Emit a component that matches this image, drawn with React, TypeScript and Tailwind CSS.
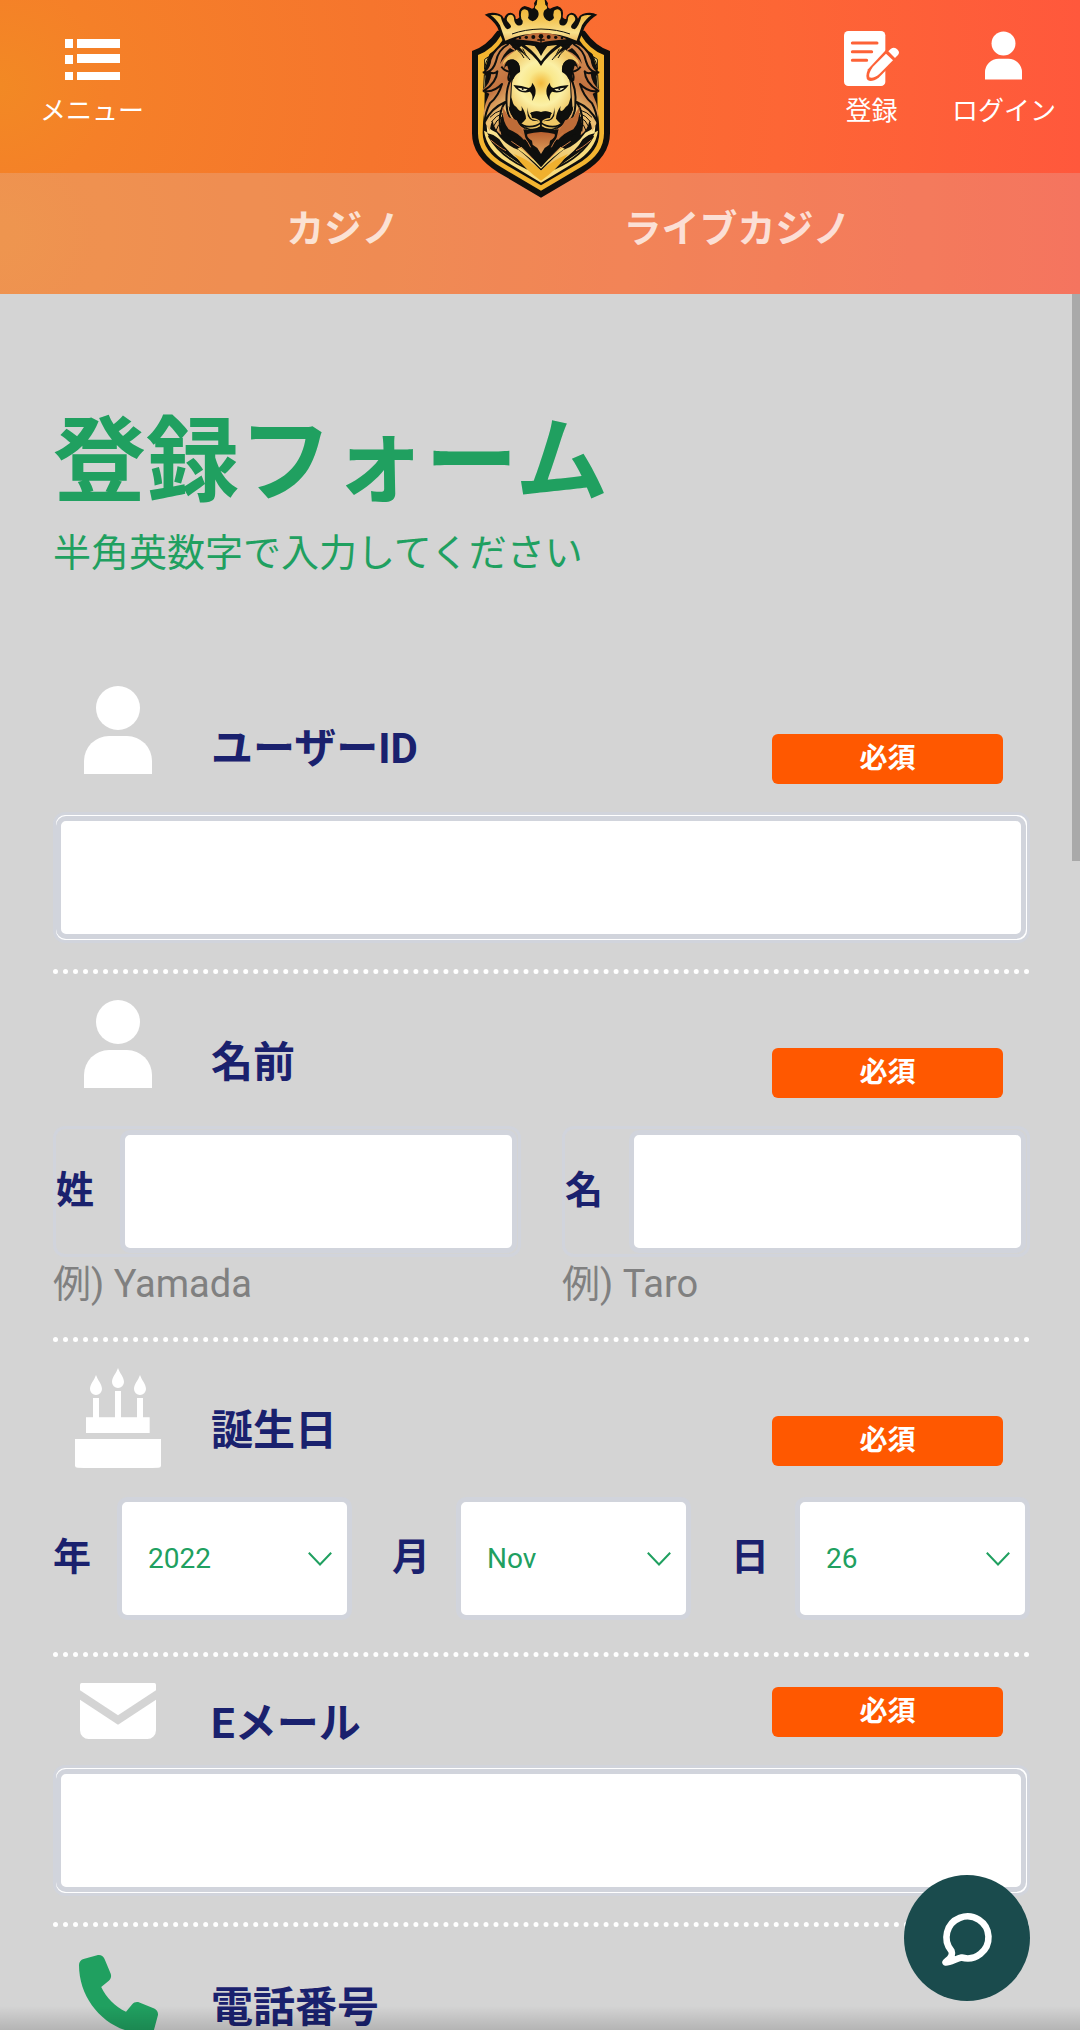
import React from "react";
import { FaPhone } from "react-icons/fa6";

const years = ["2022", "2021", "2020", "2019", "2018"];
const months = ["Nov", "Dec", "Jan", "Feb", "Mar", "Apr", "May", "Jun", "Jul", "Aug", "Sep", "Oct"];
const days = ["26", "27", "28", "29", "30"];

const PersonIcon = ({ className }: { className: string }) => (
  <svg viewBox="0 0 68 88" className={className} fill="currentColor" aria-hidden="true">
    <circle cx="34" cy="22" r="22" />
    <path d="M0 88V75a25 25 0 0 1 25-25h18a25 25 0 0 1 25 25v13z" />
  </svg>
);

const MenuIcon = () => (
  <svg viewBox="0 0 55 41" className="w-[55px] h-[41px]" fill="currentColor" aria-hidden="true">
    <path d="M0 0h8v9H0zM0 16h8v9H0zM0 33h8v8H0zM12 0h43v9H12zM12 15h43v9H12zM12 33h43v8H12z" />
  </svg>
);

const RegisterIcon = () => (
  <svg viewBox="0 0 165 165" className="w-[55px] h-[55px]" aria-hidden="true">
    <rect width="124" height="165" rx="13" fill="#fff" />
    <path
      d="M25 36h74M25 62h58M25 88h43"
      stroke="#fd6237"
      strokeWidth="9"
      strokeLinecap="round"
    />
    <path
      d="M132 50 L147 48 L165 66 L163 80 L104 140 Q84 154 72 148 Q62 140 72 115 Z"
      fill="#fd6237"
    />
    <path
      d="M126 68 L147 88 L106 129 Q88 144 76 139 Q72 128 87 107 Z"
      fill="#fff"
    />
    <path d="M133 61 L140 54 Q151 45 161 56 Q169 65 161 73 L153 81 Z" fill="#fff" />
  </svg>
);

const CakeIcon = () => (
  <svg viewBox="0 0 258 300" className="w-[86px] h-[100px]" fill="currentColor" aria-hidden="true">
    <path d="M129 0c5 15 18 28 18 42a18 18 0 0 1-36 0c0-14 13-27 18-42z" />
    <path d="M63 21c5 15 18 28 18 42a18 18 0 0 1-36 0c0-14 13-27 18-42z" />
    <path d="M195 21c5 15 18 28 18 42a18 18 0 0 1-36 0c0-14 13-27 18-42z" />
    <path d="M120 69h18v79h48V90h18v58h20v47H33v-47h21V90h18v58h48z" />
    <path d="M0 213h258v80q0 6-8 6l-20 1H28l-20-1q-8 0-8-6z" />
  </svg>
);

const MailIcon = () => (
  <svg viewBox="0 0 228 168" className="w-[76px] h-[56px]" fill="currentColor" aria-hidden="true">
    <path d="M5 0h218q5 0 5 5v17L114 97 0 22V5q0-5 5-5z" />
    <path d="M0 50l114 75 114-75v92a26 26 0 0 1-26 26H26a26 26 0 0 1-26-26z" />
  </svg>
);

const ChatIcon = () => (
  <svg
    viewBox="0 0 60 60"
    className="w-[60px] h-[60px]"
    fill="none"
    stroke="currentColor"
    strokeWidth="6.6"
    strokeLinecap="round"
    strokeLinejoin="round"
    aria-hidden="true"
  >
    <path d="M14.5 43A21 21 0 1 1 24.5 49.5C19 50.500 13 55 8.500 54.500C7.500 53 17.500 50.500 14.500 43Z" />
  </svg>
);

// left side of the crest, drawn twice with the second one mirrored
const CrestHalf = () => (
  <g>
    <path d="M118 172Q136 164 150 156L140 190L132 214L118 216L134 222L132 268L117 270L134 278L133 330L126 400Q122 390 116 360Z" fill="#f3b530" />
    <path d="M134 178L146 170Q134 192 134 208ZM133 224L138 226L135 264L131 266Z" fill="#fae28a" stroke="#0f0f0d" strokeWidth="3" />
    <path d="M132 392Q140 450 200 486L303 548V536L214 474Q158 440 140 396Z" fill="#f8dc7c" />
    <path d="M142 400Q160 402 178 418Q196 452 246 486L303 530V512Q262 470 236 450Q196 436 170 398Q154 392 140 378Z" fill="url(#crestPale)" />
    <path d="M146 408Q180 470 262 506" fill="none" stroke="#0f0f0d" strokeWidth="5" />
    <path d="M222 462Q270 482 303 512V542Q256 510 222 462Z" fill="#efb02e" />
    <path d="M232 446Q268 470 303 506V490Q276 458 262 432Z" fill="#f6d774" />
    <path
      d="M206 128Q166 142 154 180Q152 202 138 214Q148 216 154 220Q152 250 126 272Q144 276 148 282Q134 310 130 340Q136 380 150 394Q150 374 158 362Q162 388 184 406Q176 370 188 340Q196 378 240 404L262 424L272 400L226 366L208 330L214 240L200 190L226 150Z"
      fill="url(#crestMane)"
    />
    <path
      d="M206 132Q174 150 168 184Q160 210 142 216Q166 224 172 214Q170 248 132 272Q158 280 186 252Q176 288 150 310Q136 336 134 366Q154 324 196 306Q172 340 182 394M184 200Q200 220 214 212Q202 222 206 240L216 232Q196 262 200 316Q200 350 228 376"
      fill="none"
      stroke="#0f0f0d"
      strokeWidth="6"
      strokeLinejoin="round"
    />
    <path d="M150 352Q164 336 186 330M154 366Q168 346 188 340M160 380Q168 360 186 352M168 392Q174 372 186 366" fill="none" stroke="#0f0f0d" strokeWidth="3" />
    <path d="M188 320L206 352L230 360L250 396L268 404L252 420Q232 398 206 388Q186 364 188 320Z" fill="#bf6c38" />
    <path
      d="M303 146Q270 128 244 138L208 166Q190 178 188 196Q204 170 230 184Q242 196 240 216Q220 226 216 250L214 292Q224 330 232 328Q250 342 244 318Q258 340 258 356Q246 372 238 372Q262 392 276 398L303 380Z"
      fill="url(#crestFace)"
    />
    <path d="M192 206Q196 176 220 178Q240 184 240 210Q224 212 222 234L206 250Q208 226 214 208Q204 186 192 206Z" fill="#0f0f0d" />
    <path d="M210 144Q186 164 180 192Q196 162 224 152ZM224 128Q250 148 264 178Q254 158 216 142ZM240 126Q274 144 303 184V198Q284 166 240 136ZM268 124Q288 138 303 168V140Q292 126 268 124Z" fill="#0f0f0d" />
    <path d="M248 146Q256 166 270 180M232 150Q246 160 252 174" fill="none" stroke="#0f0f0d" strokeWidth="3" />
    <path d="M220 255Q246 256 266 264Q277 260 276 248Q298 272 276 303Q281 286 270 275Q238 284 220 255Z" fill="#0f0f0d" />
    <path d="M233 263Q242 274 257 272L263 268Z" fill="#fff6c0" />
    <circle cx="248" cy="267" r="3" fill="#0f0f0d" />
    <path d="M218 312Q238 326 248 354Q240 362 228 360Q208 346 206 318L222 340Z" fill="#0f0f0d" />
    <path d="M264 322Q256 354 278 362L303 364V344Q290 334 284 344Q276 350 270 340Q278 332 303 336V366Q292 362 276 358Q262 346 264 322Z" fill="#0f0f0d" />
    <path d="M272 338Q288 330 303 336V366Q292 354 276 354Z" fill="#0f0f0d" />
    <path d="M303 362V380Q284 394 262 386Q240 380 238 366Q248 380 268 380Q290 380 303 368" fill="none" stroke="#0f0f0d" strokeWidth="5" />
    <path d="M303 382Q276 394 250 388L258 420L278 440L282 456L303 480Z" fill="#0f0f0d" />
    <path d="M303 396Q280 398 262 402Q258 412 276 422L278 434L292 444L303 462Z" fill="url(#crestBeard)" />
    <path d="M196 400Q240 432 303 502V470Q276 450 262 424Q230 416 196 400Z" fill="#0f0f0d" />
    <path d="M236 398Q258 412 272 442M214 424Q250 444 278 476M152 420Q180 444 198 452" fill="none" stroke="#c97b45" strokeWidth="3" />
    <path d="M192 132L172 82Q158 58 134 44Q154 34 178 42Q188 46 192 56Q198 38 212 38Q228 42 227 56Q232 60 238 52Q232 24 254 18Q268 22 276 26Q286 24 282 10L288 0H303V140Q250 132 192 132Z" fill="#0f0f0d" />
    <path d="M196 122L180 76Q168 56 152 46Q170 42 182 50Q190 80 202 88Q222 84 206 68Q194 58 206 46Q218 40 222 54Q222 70 232 76Q250 80 248 62Q240 56 244 34Q252 22 264 32Q268 44 264 54Q278 74 292 54Q300 42 292 30Q278 24 290 14L292 0H303V100Q244 100 196 122Z" fill="url(#crestCrown)" />
    <path d="M226 118Q260 98 303 98V128Q278 122 226 118Z" fill="#bd6c38" />
    <path d="M216 102Q254 88 303 87" fill="none" stroke="#0f0f0d" strokeWidth="3" />
    <circle cx="240" cy="114" r="4" fill="#0f0f0d" />
    <circle cx="259" cy="112" r="5" fill="#0f0f0d" />
    <circle cx="280" cy="111" r="6" fill="#0f0f0d" />
  </g>
);

const LionCrest = () => (
  <svg viewBox="90 0 420 600" className="w-[140px] h-[200px]" role="img" aria-label="lion crest">
    <defs>
      <radialGradient id="crestFace" gradientUnits="userSpaceOnUse" cx="303" cy="250" r="110">
        <stop offset="0" stopColor="#f3b93a" />
        <stop offset="0.35" stopColor="#f9e88c" />
        <stop offset="0.6" stopColor="#fbf0a6" />
        <stop offset="1" stopColor="#f0c765" />
      </radialGradient>
      <linearGradient id="crestMane" x1="0" y1="0" x2="0.4" y2="1">
        <stop offset="0" stopColor="#dc9a5c" />
        <stop offset="0.5" stopColor="#c27340" />
        <stop offset="0.75" stopColor="#edc274" />
        <stop offset="1" stopColor="#c87a43" />
      </linearGradient>
      <linearGradient id="crestPale" x1="0" y1="0" x2="1" y2="1">
        <stop offset="0" stopColor="#fbe999" />
        <stop offset="1" stopColor="#e9b65a" />
      </linearGradient>
      <linearGradient id="crestBeard" x1="0" y1="0" x2="0" y2="1">
        <stop offset="0" stopColor="#b9602f" />
        <stop offset="1" stopColor="#e0a05c" />
      </linearGradient>
      <linearGradient id="crestCrown" x1="0" y1="0" x2="0" y2="1">
        <stop offset="0" stopColor="#f0b02c" />
        <stop offset="0.45" stopColor="#f3c24e" />
        <stop offset="0.8" stopColor="#f8e08c" />
        <stop offset="1" stopColor="#eebb62" />
      </linearGradient>
    </defs>
    <path d="M96 153Q140 138 172 92H434Q466 138 510 153V400Q510 470 430 518L303 593L176 518Q96 470 96 400Z" fill="#0f0f0d" />
    <path d="M114 165Q158 148 184 104H422Q448 148 492 165V400Q492 462 422 502L303 572L184 502Q114 462 114 400Z" fill="#f3b530" />
    <path d="M128 174Q164 158 190 118H416Q442 158 478 174V398Q478 454 412 492L303 556L194 492Q128 454 128 398Z" fill="#0f0f0d" />
    <CrestHalf />
    <g transform="translate(606 0) scale(-1 1)">
      <CrestHalf />
    </g>
    <circle cx="303" cy="109" r="7" fill="#0f0f0d" />
    <path d="M292 120h22M303 112v18" stroke="#0f0f0d" strokeWidth="4" />
  </svg>
);

interface HeaderLinkProps {
  label: string;
  children: React.ReactNode;
}
const HeaderLink = ({ label, children }: HeaderLinkProps) => (
  <a href="#" className="flex flex-col items-center">
    <span className="flex h-[56px] items-start">{children}</span>
    <span className="mt-1.5 text-[26px] leading-9">{label}</span>
  </a>
);

const Header = () => (
  <header className="relative shrink-0 text-white">
    <div className="flex justify-between h-[173px] pt-[31px] pl-10 pr-6 bg-[radial-gradient(circle_at_left,#f28924,#f58028_10%,#f6752d_35%,#fd6635_72%,#ff583c)]">
      <button type="button" className="flex flex-col items-center self-start cursor-pointer">
        <span className="flex h-[56px] items-center">
          <MenuIcon />
        </span>
        <span className="mt-1.5 text-[26px] leading-9">メニュー</span>
      </button>
      <div className="flex gap-[53px]">
        <HeaderLink label="登録">
          <RegisterIcon />
        </HeaderLink>
        <HeaderLink label="ログイン">
          <PersonIcon className="w-[37px] h-[49px]" />
        </HeaderLink>
      </div>
    </div>
    <div className="bg-[radial-gradient(circle_at_left,#f68328,#f77d29_10%,#f8762d_35%,#fd6635_72%,#ff583c)]">
      <nav className="flex justify-center items-center h-[121px] pb-2.5 bg-[#d4d4d4]/23">
        <div className="grid grid-cols-2 w-[73%] text-center text-[38px] leading-[56px] font-bold text-white/75">
          <a href="#">カジノ</a>
          <a href="#">ライブカジノ</a>
        </div>
      </nav>
    </div>
    <a href="#" className="absolute top-0 left-1/2 -translate-x-1/2">
      <LionCrest />
    </a>
  </header>
);

const RequiredBadge = () => (
  <span className="w-[231px] h-[50px] mr-[27px] rounded-md bg-[#ff5800] text-center text-[28px] leading-[49px] font-bold text-white">
    必須
  </span>
);

interface FieldHeadProps {
  icon: React.ReactNode;
  label: string;
  htmlFor?: string;
}

const TallFieldHead = ({ icon, label, htmlFor }: FieldHeadProps) => (
  <div className="flex items-end h-[124px] pt-[26px] mb-7">
    <span className="flex justify-center self-start w-[130px] text-white">{icon}</span>
    <label htmlFor={htmlFor} className="flex-1 ml-7 pb-1 text-[42px] leading-[62px] font-bold text-[#1a216e]">
      {label}
    </label>
    <RequiredBadge />
  </div>
);

const FieldHead = ({ icon, label, htmlFor }: FieldHeadProps) => (
  <div className="flex items-start h-[108px] pt-[30px]">
    <span className="flex justify-center -mt-1 w-[130px] text-white">{icon}</span>
    <label htmlFor={htmlFor} className="flex-1 ml-7 pb-1 self-center text-[42px] leading-[62px] font-bold text-[#1a216e]">
      {label}
    </label>
    <RequiredBadge />
  </div>
);

const Divider = () => <hr className="border-0 border-t-[5px] border-dotted border-white" />;

const WideInput = ({ id, type }: { id: string; type: string }) => (
  <div className="h-[131px] mb-[26px] py-px pr-px rounded-xl border-[3px] border-[#d1d4dc] bg-white">
    <input
      id={id}
      type={type}
      className="block w-full h-full px-6 rounded-[10px] border-[5px] border-[#d1d4dc] bg-white text-[28px] text-[#20a060] outline-none"
    />
  </div>
);

interface NameInputProps {
  id: string;
  label: string;
  hint: string;
}
const NameInput = ({ id, label, hint }: NameInputProps) => (
  <div>
    <div className="flex items-center h-[131px] py-px pr-px rounded-xl border-[3px] border-[#d1d4dc]">
      <label htmlFor={id} className="w-16 shrink-0 pb-1 text-[38px] leading-[56px] font-bold text-[#1a216e]">
        {label}
      </label>
      <input
        id={id}
        type="text"
        className="flex-1 min-w-0 h-full px-6 rounded-[10px] border-[5px] border-[#d1d4dc] bg-white text-[28px] text-[#20a060] outline-none"
      />
    </div>
    <p className="text-[38px] leading-[54px] text-[#808080]">{hint}</p>
  </div>
);

interface DateSelectProps {
  id: string;
  label: string;
  options: string[];
}
const DateSelect = ({ id, label, options }: DateSelectProps) => (
  <div className="flex items-center">
    <label htmlFor={id} className="w-16 shrink-0 pb-1 text-[38px] leading-[56px] font-bold text-[#1a216e]">
      {label}
    </label>
    <div className="relative flex-1">
      <select
        id={id}
        className="block w-full h-[123px] pl-[26px] appearance-none rounded-[10px] border-[5px] border-[#d1d4dc] bg-white text-[28px] text-[#20a060]"
      >
        {options.map((option) => (
          <option key={option}>{option}</option>
        ))}
      </select>
      <svg
        viewBox="0 0 24 14"
        className="absolute right-5 top-1/2 -translate-y-1/2 w-6 h-[14px] pointer-events-none"
        fill="none"
        stroke="#20a060"
        strokeWidth="2"
        aria-hidden="true"
      >
        <path d="M0.8 0.8L12 12.5L23.2 0.8" />
      </svg>
    </div>
  </div>
);

const App = () => {
  return (
    <div className="relative flex flex-col h-screen overflow-hidden bg-[#d4d4d4] font-[Roboto,'Noto_Sans_CJK_JP',sans-serif]">
      <Header />
      <main className="relative flex-1 min-h-0 overflow-hidden">
        <form className="pt-[119px] pl-[53px] pr-[50px]">
          <h1 className="text-[93px] leading-[100px] font-bold text-[#20a060]">登録フォーム</h1>
          <p className="mt-3 mb-[79px] text-[38px] leading-[56px] text-[#20a060]">
            半角英数字で入力してください
          </p>

          <TallFieldHead
            icon={<PersonIcon className="w-[68px] h-[88px]" />}
            label="ユーザーID"
            htmlFor="userId"
          />
          <WideInput id="userId" type="text" />
          <Divider />

          <TallFieldHead
            icon={<PersonIcon className="w-[68px] h-[88px]" />}
            label="名前"
            htmlFor="lastName"
          />
          <div className="grid grid-cols-2 gap-[41px] mb-[26px]">
            <NameInput id="lastName" label="姓" hint="例) Yamada" />
            <NameInput id="firstName" label="名" hint="例) Taro" />
          </div>
          <Divider />

          <TallFieldHead icon={<CakeIcon />} label="誕生日" htmlFor="birthYear" />
          <div className="grid grid-cols-3 gap-10 pt-[3px] mb-8">
            <DateSelect id="birthYear" label="年" options={years} />
            <DateSelect id="birthMonth" label="月" options={months} />
            <DateSelect id="birthDay" label="日" options={days} />
          </div>
          <Divider />

          <FieldHead icon={<MailIcon />} label="Eメール" htmlFor="email" />
          <WideInput id="email" type="email" />
          <Divider />

          <div className="flex items-start pt-7">
            <span className="flex justify-center w-[130px]">
              <FaPhone className="w-[79px] h-[79px] text-[#20a060]" />
            </span>
            <h2 className="ml-7 pt-8 text-[42px] leading-[42px] font-bold text-[#1a216e]">電話番号</h2>
          </div>
        </form>
        <div className="absolute top-0 right-0 w-2 h-[567px] bg-[#a9a9a9]" />
      </main>
      <div className="absolute inset-x-0 bottom-0 h-6 bg-linear-to-t from-black/15 to-transparent pointer-events-none" />
      <button
        type="button"
        aria-label="チャット"
        className="absolute right-[50px] bottom-[29px] flex items-center justify-center w-[126px] h-[126px] rounded-full bg-[#1a4b4d] text-white cursor-pointer"
      >
        <ChatIcon />
      </button>
    </div>
  );
};

export default App;
